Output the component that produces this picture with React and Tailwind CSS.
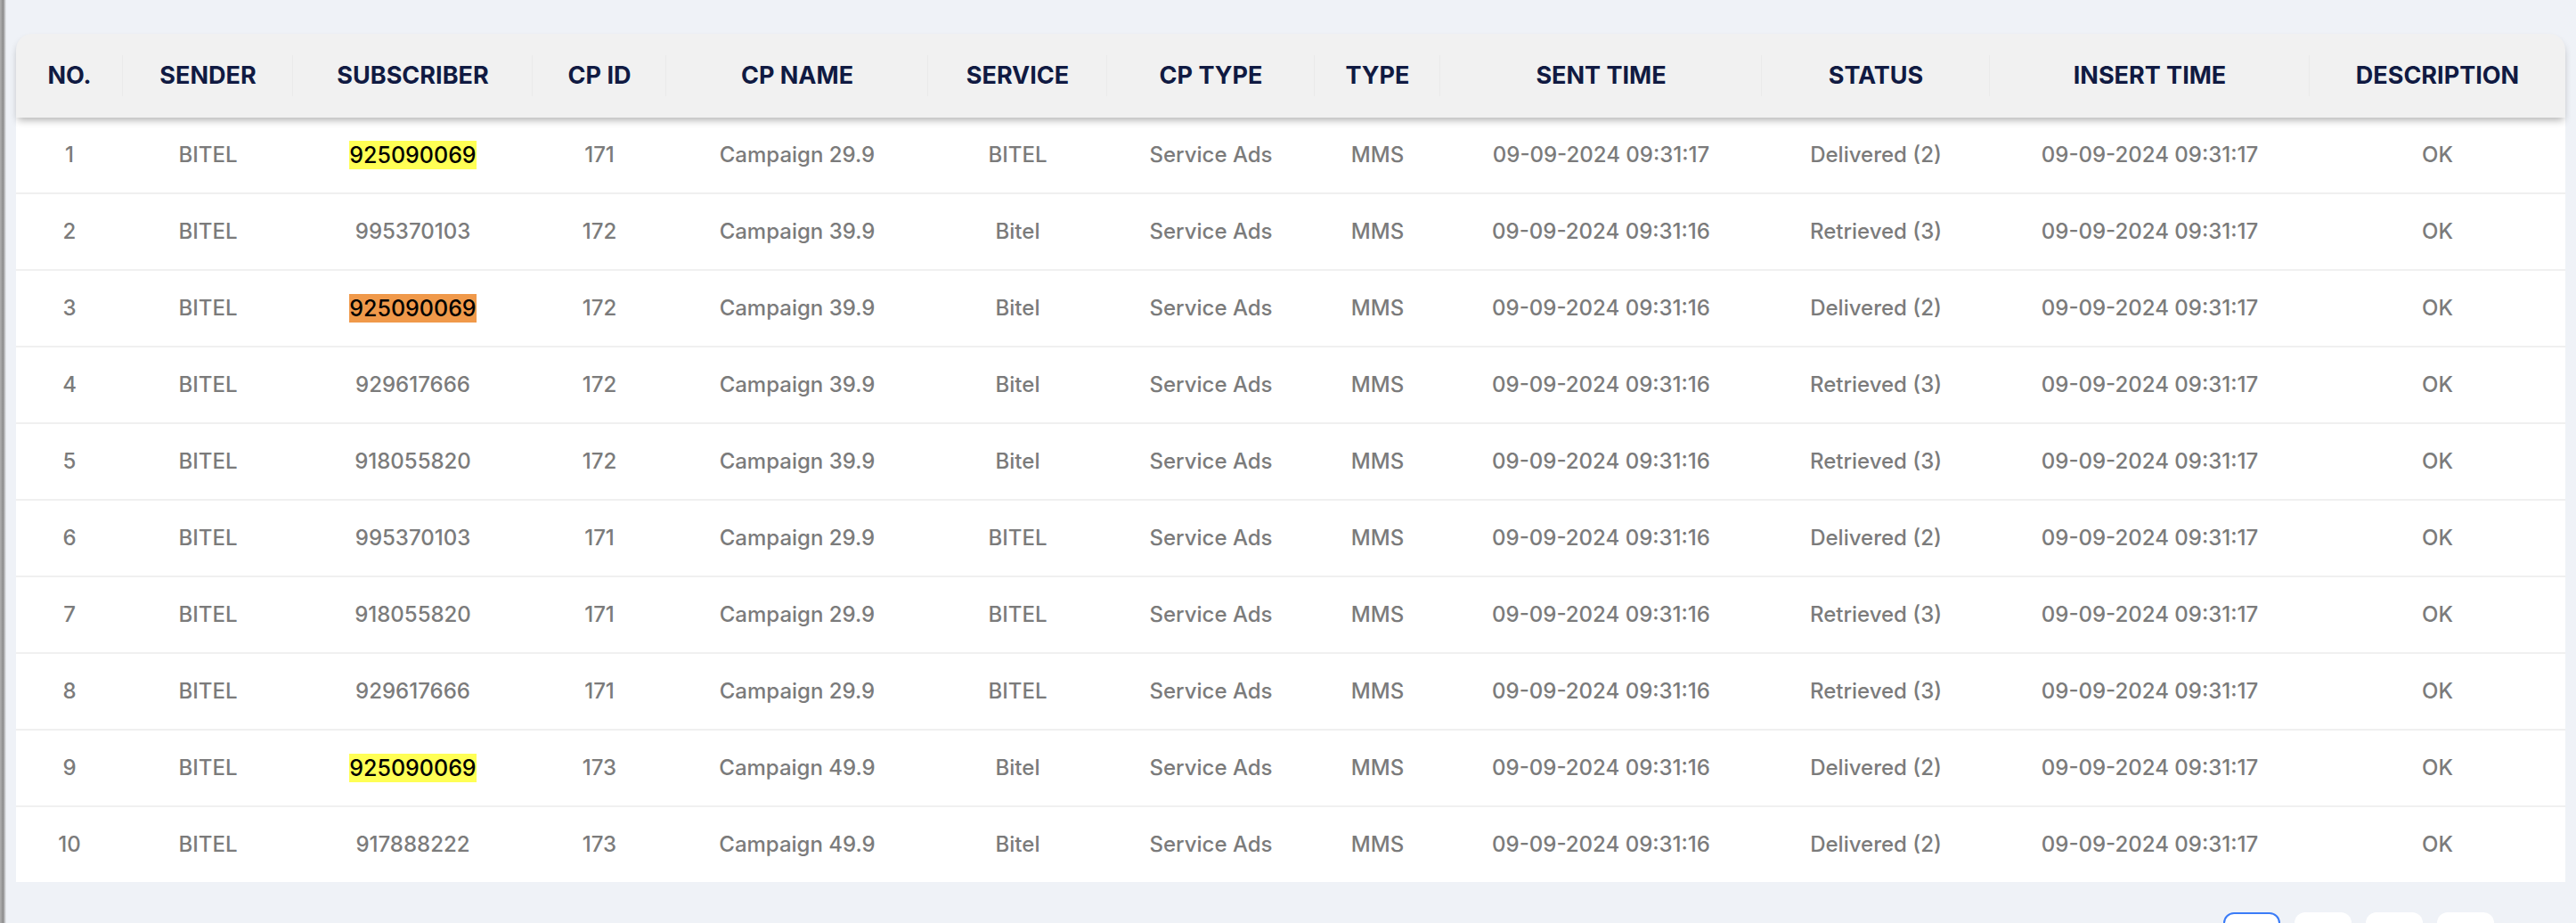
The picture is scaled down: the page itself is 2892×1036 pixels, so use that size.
import React from "react";

const columns = [
  { label: "NO.", width: "w-[120px]" },
  { label: "SENDER", width: "w-[191px]" },
  { label: "SUBSCRIBER", width: "w-[269px]" },
  { label: "CP ID", width: "w-[150px]" },
  { label: "CP NAME", width: "w-[294px]" },
  { label: "SERVICE", width: "w-[201px]" },
  { label: "CP TYPE", width: "w-[233px]" },
  { label: "TYPE", width: "w-[141px]" },
  { label: "SENT TIME", width: "w-[361px]" },
  { label: "STATUS", width: "w-[256px]" },
  { label: "INSERT TIME", width: "w-[359px]" },
  { label: "DESCRIPTION", width: "w-[287px]" },
];

const rows = [
  { no: 1, sub: "925090069", mark: "yellow", cpId: 171, cpName: "Campaign 29.9", service: "BITEL", sent: "09:31:17", status: "Delivered (2)" },
  { no: 2, sub: "995370103", cpId: 172, cpName: "Campaign 39.9", service: "Bitel", sent: "09:31:16", status: "Retrieved (3)" },
  { no: 3, sub: "925090069", mark: "orange", cpId: 172, cpName: "Campaign 39.9", service: "Bitel", sent: "09:31:16", status: "Delivered (2)" },
  { no: 4, sub: "929617666", cpId: 172, cpName: "Campaign 39.9", service: "Bitel", sent: "09:31:16", status: "Retrieved (3)" },
  { no: 5, sub: "918055820", cpId: 172, cpName: "Campaign 39.9", service: "Bitel", sent: "09:31:16", status: "Retrieved (3)" },
  { no: 6, sub: "995370103", cpId: 171, cpName: "Campaign 29.9", service: "BITEL", sent: "09:31:16", status: "Delivered (2)" },
  { no: 7, sub: "918055820", cpId: 171, cpName: "Campaign 29.9", service: "BITEL", sent: "09:31:16", status: "Retrieved (3)" },
  { no: 8, sub: "929617666", cpId: 171, cpName: "Campaign 29.9", service: "BITEL", sent: "09:31:16", status: "Retrieved (3)" },
  { no: 9, sub: "925090069", mark: "yellow", cpId: 173, cpName: "Campaign 49.9", service: "Bitel", sent: "09:31:16", status: "Delivered (2)" },
  { no: 10, sub: "917888222", cpId: 173, cpName: "Campaign 49.9", service: "Bitel", sent: "09:31:16", status: "Delivered (2)" },
];

function Subscriber({ value, mark }) {
  if (!mark) return <span>{value}</span>;
  return (
    <span
      className={`text-black font-medium leading-[32px] text-[25px] ${
        mark === "yellow" ? "bg-[#ffff55]" : "bg-[#f0994a]"
      }`}
    >
      {value}
    </span>
  );
}

export default function App() {
  return (
    <div className="min-h-screen bg-[#eff2f7] flex font-['Inter',sans-serif]">
      {/* edge of the sidebar */}
      <div className="w-[7px] shrink-0 bg-linear-to-r from-[#b0b0b0] via-[#8e8e8e] to-[#eff2f7]" />

      <div className="pl-[11px] pt-[38px]">
        <div className="w-fit">
          {/* header */}
          <div className="relative z-10 flex h-[94px] rounded-t-[18px] bg-[#f1f1f1] shadow-[0_5px_8px_-2px_rgba(0,0,0,0.3)]">
            {columns.map((col, i) => (
              <div
                key={col.label}
                className={`${col.width} relative flex items-center justify-center text-[27px] font-bold text-[#101a42]`}
              >
                {col.label}
                {i < columns.length - 1 && (
                  <span className="absolute right-0 top-1/2 h-[46px] w-px -translate-y-1/2 bg-[#eaeaea]" />
                )}
              </div>
            ))}
          </div>

          {/* body */}
          <div className="bg-white divide-y-2 divide-[#f0f0f0]">
            {rows.map((row) => {
              const cells = [
                row.no,
                "BITEL",
                <Subscriber value={row.sub} mark={row.mark} />,
                row.cpId,
                row.cpName,
                row.service,
                "Service Ads",
                "MMS",
                `09-09-2024 ${row.sent}`,
                row.status,
                "09-09-2024 09:31:17",
                "OK",
              ];
              return (
                <div key={row.no} className="flex">
                  {cells.map((cell, i) => (
                    <div
                      key={i}
                      className={`${columns[i].width} h-[84px] flex items-center justify-center text-[24px] font-medium text-[#7b7b7b]`}
                    >
                      {cell}
                    </div>
                  ))}
                </div>
              );
            })}
          </div>

          {/* pagination */}
          <div className="mt-[34px] flex justify-end gap-4 pr-[80px]">
            <button aria-label="page 1" className="w-16 h-[56px] rounded-[12px] bg-white border-2 border-[#3b7cf7]" />
            <button aria-label="page 2" className="w-16 h-[56px] rounded-[12px] bg-white" />
            <button aria-label="page 3" className="w-16 h-[56px] rounded-[12px] bg-white" />
            <button aria-label="page 4" className="w-16 h-[56px] rounded-[12px] bg-white" />
          </div>
        </div>
      </div>
    </div>
  );
}
